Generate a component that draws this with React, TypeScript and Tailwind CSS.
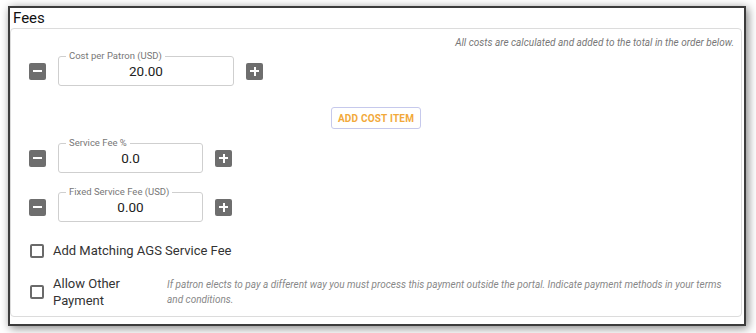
import React from 'react'

function StepButton({ kind }: { kind: 'minus' | 'plus' }) {
  return (
    <div className="relative h-[17px] w-[17px] shrink-0 rounded-[2px] bg-[#6e6e6e]">
      <div className="absolute left-[4px] top-[7.5px] h-[2px] w-[9px] bg-white" />
      {kind === 'plus' && <div className="absolute left-[7.5px] top-[4px] h-[9px] w-[2px] bg-white" />}
    </div>
  )
}

function AmountField({ label, value, width }: { label: string; value: string; width: string }) {
  return (
    <div className="flex items-center">
      <StepButton kind="minus" />
      <div className={`relative ml-[12px] flex h-[30px] items-center justify-center rounded-[3px] border border-[#cfcfcf] ${width}`}>
        <span className="absolute left-[7px] top-[-7px] bg-white px-[3px] text-[9.5px] leading-[12px] text-[#777]">
          {label}
        </span>
        <span className="pt-[1px] text-[13.5px] text-[#222]">{value}</span>
      </div>
      <div className="ml-[12px]">
        <StepButton kind="plus" />
      </div>
    </div>
  )
}

function Checkbox() {
  return <div className="h-[14px] w-[14px] shrink-0 rounded-[2px] border-2 border-[#6a6a6a] bg-white" />
}

export default function App() {
  return (
    <div className="h-[333px] w-[756px] overflow-hidden bg-white pl-[8px] pt-[6px] font-['Roboto',sans-serif]">
      <div className="flex h-[320px] w-[738px] flex-col border-2 border-[#3c3c3c] bg-white shadow-[2px_2px_9px_rgba(0,0,0,0.5)]">
        {/* Header */}
        <div className="flex h-[20px] items-center pl-[3px] text-[15px] leading-none text-[#111]">Fees</div>

        {/* Card */}
        <div className="mr-[2px] flex h-[289px] flex-col rounded-[4px] border border-[#dcdcdc] pl-[18px]">
          <div className="mt-[7px] pr-[7px] text-right text-[10px] italic leading-[14px] text-[#777]">
            All costs are calculated and added to the total in the order below.
          </div>

          <div className="mt-[6px]">
            <AmountField label="Cost per Patron (USD)" value="20.00" width="w-[176px]" />
          </div>

          <div className="mt-[21px] flex justify-center pr-[18px]">
            <div className="flex h-[22px] w-[90px] items-center justify-center rounded-[3px] border border-[#c6c9ec] text-[10px] font-bold tracking-[0.2px] text-[#f2a93b]">
              ADD COST ITEM
            </div>
          </div>

          <div className="mt-[14px]">
            <AmountField label="Service Fee %" value="0.0" width="w-[145px]" />
          </div>

          <div className="mt-[19px]">
            <AmountField label="Fixed Service Fee (USD)" value="0.00" width="w-[145px]" />
          </div>

          <div className="mt-[19px] flex h-[20px] items-center pl-[1px]">
            <Checkbox />
            <span className="ml-[9px] text-[13px] text-[#333]">Add Matching AGS Service Fee</span>
          </div>

          <div className="mt-[14px] flex items-center pl-[1px]">
            <Checkbox />
            <span className="ml-[9px] w-[106px] shrink-0 text-[13px] leading-[17px] text-[#333]">
              Allow Other Payment
            </span>
            <span className="ml-[8px] pr-[10px] text-[10px] italic leading-[15px] text-[#888]">
              If patron elects to pay a different way you must process this payment outside the portal. Indicate
              payment methods in your terms and conditions.
            </span>
          </div>
        </div>
      </div>
    </div>
  )
}
